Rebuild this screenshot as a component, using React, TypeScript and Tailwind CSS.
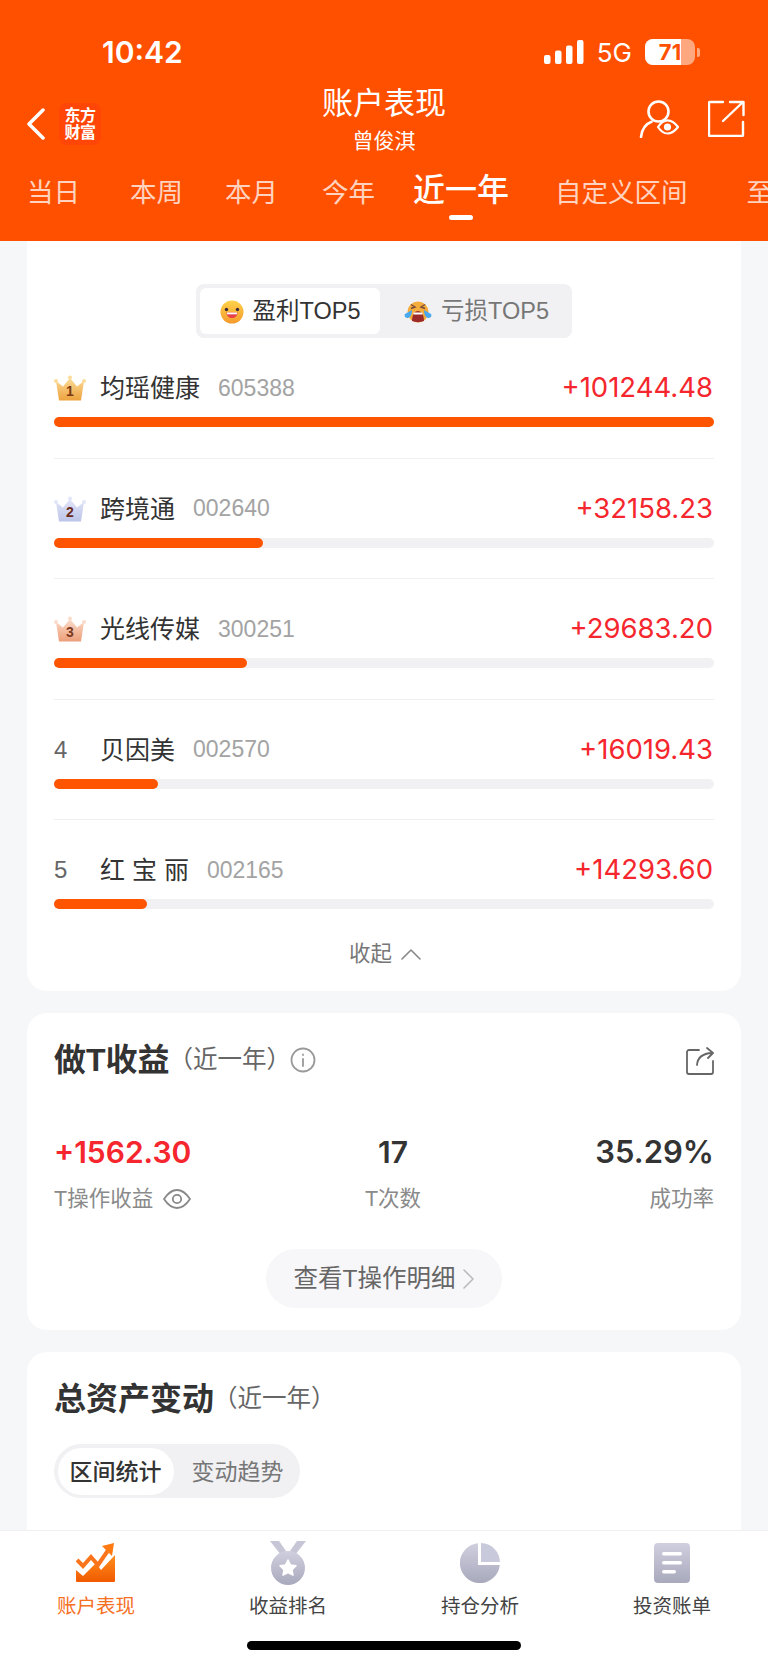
import React from "react";

const sans = { fontFamily: '"Liberation Sans","Noto Sans CJK SC",sans-serif' };
const digits = { fontFamily: "Inter,sans-serif" };

function Signal() {
  return (
    <svg width="40" height="24" viewBox="0 0 40 24" fill="#fff">
      <rect x="0" y="15" width="6.5" height="9" rx="2" />
      <rect x="11" y="10.5" width="6.5" height="13.5" rx="2" />
      <rect x="22" y="5.5" width="6.5" height="18.5" rx="2" />
      <rect x="33" y="0" width="6.5" height="24" rx="2" />
    </svg>
  );
}

function Battery() {
  return (
    <div className="flex items-center gap-[2px]">
      <div className="relative w-[50px] h-[26px] rounded-[8px] bg-white/50 overflow-hidden">
        <div className="absolute inset-y-0 left-0 w-[71%] bg-white" />
        <span className="absolute inset-0 flex items-center justify-center text-[22px] font-bold text-[#ff5000] leading-none" style={digits}>71</span>
      </div>
      <div className="w-[3px] h-[9px] rounded-r-[2px] bg-white/50" />
    </div>
  );
}

function WatchUser() {
  return (
    <svg width="40" height="38" viewBox="0 0 40 38" fill="none" stroke="#fff" strokeWidth="2.6" strokeLinecap="round">
      <circle cx="19.5" cy="11.5" r="10" />
      <path d="M2 37c.8-7.6 4.700-13 10.500-15.200" />
      <path d="M19 27c3-4.600 6-6.600 9.500-6.600S35.500 22.400 39 27c-3.500 4.500-7 6.500-10.500 6.500S22 31.500 19 27z" fill="#ff5000" strokeWidth="2.200" />
      <circle cx="28.500" cy="27" r="3.600" fill="#fff" stroke="none" />
    </svg>
  );
}

function ExportBox() {
  return (
    <svg width="37" height="37" viewBox="0 0 37 37" fill="none" stroke="#fff" strokeWidth="2.400" strokeLinecap="round" strokeLinejoin="round">
      <path d="M15 2H2a1 1 0 0 0-1 1v32a1 1 0 0 0 1 1h32a1 1 0 0 0 1-1V22" />
      <path d="M15 21 35 2M22 2h13.500v13" />
    </svg>
  );
}

function Smile() {
  return (
    <svg width="24" height="24" viewBox="0 0 24 24">
      <defs>
        <linearGradient id="smileFace" x1="0" y1="0" x2="0" y2="1">
          <stop offset="0" stopColor="#ffd24a" />
          <stop offset="1" stopColor="#f59a2c" />
        </linearGradient>
      </defs>
      <circle cx="12" cy="12" r="11.500" fill="url(#smileFace)" />
      <circle cx="6.500" cy="9.500" r="1.700" fill="#3a2a3a" />
      <circle cx="17.500" cy="9.500" r="1.700" fill="#3a2a3a" />
      <path d="M6.500 12.500h11c0 3.500-2.500 5.500-5.500 5.500s-5.500-2-5.500-5.500z" fill="#e8404a" />
      <path d="M7 12.500h10v1.800H7z" fill="#fff" />
    </svg>
  );
}

function Crying() {
  return (
    <svg width="28" height="22" viewBox="0 0 28 22">
      <circle cx="14" cy="11" r="10.500" fill="#f4ad3d" />
      <path d="M7 3.500l4 2.500-4 1.500M21 3.500 17 6l4 1.500" fill="none" stroke="#7a4a3a" strokeWidth="1.400" />
      <path d="M8 20c0-6 2.500-10 6-10s6 4 6 10c-3.500 1.500-8.500 1.500-12 0z" fill="#9c2a2a" />
      <path d="M9.500 11.500h9v2h-9z" fill="#fff" />
      <path d="M8 9 1 13c-1.500 3 1.500 5 4 3.500 2-1 3-4 3-7.500zM20 9l7 4c1.500 3-1.500 5-4 3.500-2-1-3-4-3-7.500z" fill="#4aa8ee" />
    </svg>
  );
}

const crownTones = {
  1: { top: "#fbdc98", bottom: "#eda23e", ink: "#7a3a12" },
  2: { top: "#e2e6f8", bottom: "#bcc4e8", ink: "#6a2a1a" },
  3: { top: "#fbdccb", bottom: "#ec9e78", ink: "#7a3a22" },
};

function Crown({ rank }: { rank: 1 | 2 | 3 }) {
  const tone = crownTones[rank];
  const id = `crownFill${rank}`;
  return (
    <div className="relative w-[32px] h-[26px]">
      <svg width="32" height="26" viewBox="0 0 32 26" className="absolute inset-0">
        <defs>
          <linearGradient id={id} x1="0" y1="0" x2="0" y2="1">
            <stop offset="0" stopColor={tone.top} />
            <stop offset="1" stopColor={tone.bottom} />
          </linearGradient>
        </defs>
        <path d="M2 6 9 11.500 16 3l7 8.500L30 6l-3 19.500H5z" fill={`url(#${id})`} />
        <circle cx="2" cy="6" r="2" fill={tone.top} />
        <circle cx="16" cy="2.500" r="2" fill={tone.top} />
        <circle cx="30" cy="6" r="2" fill={tone.top} />
      </svg>
      <span className="absolute left-0 right-0 top-[9px] text-center text-[14px] leading-[15px] font-bold" style={{ color: tone.ink, fontFamily: '"Liberation Sans",sans-serif' }}>{rank}</span>
    </div>
  );
}

type Holding = { rank: number; name: string; code: string; gain: string; fill: number };

const holdings: Holding[] = [
  { rank: 1, name: "均瑶健康", code: "605388", gain: "+101244.48", fill: 660 },
  { rank: 2, name: "跨境通", code: "002640", gain: "+32158.23", fill: 209 },
  { rank: 3, name: "光线传媒", code: "300251", gain: "+29683.20", fill: 193 },
  { rank: 4, name: "贝因美", code: "002570", gain: "+16019.43", fill: 104 },
  { rank: 5, name: "红 宝 丽", code: "002165", gain: "+14293.60", fill: 93 },
];

function HoldingRow({ item, last }: { item: Holding; last: boolean }) {
  return (
    <div className={`pt-[30px] ${last ? "" : "pb-[30.500px] border-b border-[#f0f0f2]"}`}>
      <div className="h-[40px] flex items-center">
        <div className="w-[46px] shrink-0">
          {item.rank <= 3 ? (
            <Crown rank={item.rank as 1 | 2 | 3} />
          ) : (
            <span className="text-[24px] text-[#666]">{item.rank}</span>
          )}
        </div>
        <span className="relative top-[1px] text-[25px] text-[#333] whitespace-pre">{item.name}</span>
        <span className="ml-[18px] text-[23px] text-[#a3a3a3]">{item.code}</span>
        <span className="ml-auto pr-[1px] text-[27.500px] text-[#f5262d]" style={digits}>{item.gain}</span>
      </div>
      <div className="mt-[9px] h-[10px] rounded-full bg-[#f1f1f4]">
        <div className="h-full rounded-full bg-[#ff5500]" style={{ width: item.fill }} />
      </div>
    </div>
  );
}

function TabIcon({ kind }: { kind: string }) {
  if (kind === "chart") {
    return (
      <svg width="40" height="40" viewBox="0 0 40 40">
        <defs>
          <linearGradient id="chartFill" x1="0" y1="0" x2="0" y2="1">
            <stop offset="0" stopColor="#ff8f1f" />
            <stop offset="1" stopColor="#f05a00" />
          </linearGradient>
        </defs>
        <path d="M0 27l7 6 13-13 5 7 14-15v26a1 1 0 0 1-1 1H1a1 1 0 0 1-1-1z" fill="url(#chartFill)" />
        <path d="M1 17l6 6 8-9 7 8 11-16" fill="none" stroke="#f9741a" strokeWidth="4" />
        <path d="M26 3 38 0l-2 13z" fill="#ff7a10" />
      </svg>
    );
  }
  if (kind === "medal") {
    return (
      <svg width="36" height="44" viewBox="0 0 36 44">
        <defs>
          <linearGradient id="medalFill" x1="0" y1="0" x2="0" y2="1">
            <stop offset="0" stopColor="#cfcfde" />
            <stop offset="1" stopColor="#a9a9bd" />
          </linearGradient>
        </defs>
        <path d="M0 0h9l7 10-5 4zM36 0h-9l-7 10 5 4z" fill="#c6c6d6" />
        <circle cx="18" cy="27" r="17" fill="url(#medalFill)" />
        <path d="M18 19l2.500 5 5.500.8-4 3.900 1 5.500-5-2.600-5 2.600 1-5.500-4-3.900 5.500-.8z" fill="#fff" strokeLinejoin="round" stroke="#fff" strokeWidth="1.500" />
      </svg>
    );
  }
  if (kind === "pie") {
    return (
      <svg width="40" height="40" viewBox="0 0 40 40">
        <defs>
          <linearGradient id="pieFill" x1="0" y1="0" x2="0" y2="1">
            <stop offset="0" stopColor="#cfcfde" />
            <stop offset="1" stopColor="#a9a9bd" />
          </linearGradient>
        </defs>
        <path d="M18 .2V22h21.800A20 20 0 1 1 18 .2z" fill="url(#pieFill)" />
        <path d="M21 0a19.500 19.500 0 0 1 19 19H21z" fill="#c9c9dc" />
      </svg>
    );
  }
  return (
    <svg width="36" height="40" viewBox="0 0 36 40">
      <defs>
        <linearGradient id="docFill" x1="0" y1="0" x2="0" y2="1">
          <stop offset="0" stopColor="#cfcfde" />
          <stop offset="1" stopColor="#a9a9bd" />
        </linearGradient>
      </defs>
      <rect width="36" height="40" rx="4" fill="url(#docFill)" />
      <rect x="8" y="9" width="20" height="3.500" rx="1.700" fill="#fff" />
      <rect x="8" y="18" width="20" height="3.500" rx="1.700" fill="#fff" />
      <rect x="8" y="27" width="14" height="3.500" rx="1.700" fill="#fff" />
    </svg>
  );
}

const tabs = [
  { icon: "chart", label: "账户表现", active: true },
  { icon: "medal", label: "收益排名", active: false },
  { icon: "pie", label: "持仓分析", active: false },
  { icon: "doc", label: "投资账单", active: false },
];

export default function App() {
  return (
    <div className="relative w-[768px] h-[1665px] flex flex-col overflow-hidden bg-[#f6f7f9]" style={sans}>
      <header className="shrink-0 h-[241px] bg-[#ff5000] text-white flex flex-col">
        {/* status bar */}
        <div className="h-[80px] pt-[24px] flex items-center pl-[102px] pr-[68px]">
          <span className="text-[30px] font-semibold" style={digits}>10:42</span>
          <div className="ml-auto flex items-center">
            <Signal />
            <span className="ml-[13px] mr-[13px] text-[26px]" style={digits}>5G</span>
            <Battery />
          </div>
        </div>
        {/* title row */}
        <div className="relative h-[82px] flex items-start">
          <div className="pl-[27px] pt-[23px] flex items-center">
            <svg width="18" height="32" viewBox="0 0 18 32" fill="none" stroke="#fff" strokeWidth="3.500" strokeLinecap="round" strokeLinejoin="round">
              <path d="M16 2 2 16l14 14" />
            </svg>
            <div className="ml-[14px] w-[42px] h-[42px] rounded-[8px] bg-[#ff4606] flex items-center justify-center text-center text-[16px] leading-[17px] font-bold tracking-[-0.5px]">
              东方<br />财富
            </div>
          </div>
          <div className="absolute left-0 right-0 top-[4px] text-center">
            <div className="text-[31px] leading-[40px]">账户表现</div>
            <div className="text-[21px] leading-[30px] mt-[2px]">曾俊淇</div>
          </div>
          <div className="ml-auto pt-[20px] pr-[23px] flex items-start gap-[29px]">
            <WatchUser />
            <ExportBox />
          </div>
        </div>
        {/* period tabs */}
        <div className="h-[79px] pl-[27px] flex items-start overflow-hidden whitespace-nowrap text-[26.500px] leading-[62px] text-white/75">
          <span>当日</span>
          <span className="ml-[50px]">本周</span>
          <span className="ml-[42px]">本月</span>
          <span className="ml-[44px]">今年</span>
          <span className="relative ml-[38px] text-[32px] leading-[56px] font-medium text-white">
            近一年
            <span className="absolute left-[36px] top-[53px] w-[24px] h-[5px] rounded-full bg-white" />
          </span>
          <span className="ml-[46px]">自定义区间</span>
          <span className="ml-[59px]">至今</span>
        </div>
      </header>

      <main className="flex-1 min-h-0 overflow-hidden px-[27px] flex flex-col gap-[22px]">
        <section className="bg-white rounded-b-[20px] pt-[43px] px-[27px] h-[750px] shrink-0">
          <div className="flex justify-center">
            <div className="w-[376px] h-[54px] rounded-[8px] bg-[#f1f1f4] p-[4px] flex items-stretch">
              <div className="w-[180px] rounded-[6px] bg-white flex items-center justify-center gap-[9px] pt-[2px] text-[23.500px] text-[#333]">
                <Smile />
                <span>盈利TOP5</span>
              </div>
              <div className="flex-1 flex items-center justify-center gap-[9px] pt-[2px] pl-[5px] text-[23.500px] text-[#777]">
                <Crying />
                <span>亏损TOP5</span>
              </div>
            </div>
          </div>
          {holdings.map((item, i) => (
            <HoldingRow key={item.rank} item={item} last={i === holdings.length - 1} />
          ))}
          <div className="mt-[28px] ml-[3px] h-[34px] flex items-center justify-center gap-[8px] text-[21.500px] text-[#777]">
            <span>收起</span>
            <svg width="22" height="12" viewBox="0 0 22 12" fill="none" stroke="#888" strokeWidth="1.600" strokeLinecap="round" strokeLinejoin="round">
              <path d="M2 11 11 2l9 9" />
            </svg>
          </div>
        </section>

        <section className="bg-white rounded-[20px] h-[317px] px-[27px] pt-[27px] shrink-0">
          <div className="flex items-center h-[40px]">
            <h2 className="text-[32px] font-bold text-[#333]">做T收益</h2>
            <span className="ml-[-1px] text-[24.500px] text-[#666]">（近一年）</span>
            <svg className="ml-[-1px]" width="26" height="26" viewBox="0 0 26 26" fill="none" stroke="#999" strokeWidth="1.800" strokeLinecap="round">
              <circle cx="13" cy="13" r="11.500" />
              <path d="M13 12v7M13 7.500v.5" />
            </svg>
            <svg className="ml-auto" width="28" height="29" viewBox="0 0 28 29" fill="none" stroke="#666" strokeWidth="1.800" strokeLinecap="round" strokeLinejoin="round">
              <path d="M13 4H3a2 2 0 0 0-2 2v20a2 2 0 0 0 2 2h22a2 2 0 0 0 2-2V15" />
              <path d="M11 19c.5-7 5-11.500 15-12M21 2l6 5-5 5" />
            </svg>
          </div>
          <div className="mt-[47px] grid grid-cols-3">
            <div>
              <div className="text-[30px] leading-[50px] font-semibold text-[#f5262d]" style={digits}>+1562.30</div>
              <div className="mt-[6px] flex items-center text-[21.500px] leading-[32px] text-[#8a8a8a]">
                <span>T操作收益</span>
                <svg className="ml-[10px]" width="28" height="20" viewBox="0 0 28 20" fill="none" stroke="#888" strokeWidth="1.800">
                  <path d="M1 10c4-6 8.500-9 13-9s9 3 13 9c-4 6-8.500 9-13 9s-9-3-13-9z" />
                  <circle cx="14" cy="10" r="4.200" />
                </svg>
              </div>
            </div>
            <div className="text-center pl-[18px]">
              <div className="text-[30px] leading-[50px] font-semibold text-[#333]" style={digits}>17</div>
              <div className="mt-[6px] text-[21.500px] leading-[32px] text-[#8a8a8a]">T次数</div>
            </div>
            <div className="text-right">
              <div className="text-[31px] leading-[50px] font-semibold text-[#333]" style={digits}>35.29%</div>
              <div className="mt-[6px] text-[21.500px] leading-[32px] text-[#8a8a8a]">成功率</div>
            </div>
          </div>
          <div className="mt-[34px] flex justify-center">
            <div className="w-[236px] h-[59px] rounded-full bg-[#f7f7f9] flex items-center justify-center gap-[8px] pt-[1px] text-[24.500px] text-[#666]">
              <span>查看T操作明细</span>
              <svg width="11" height="20" viewBox="0 0 11 20" fill="none" stroke="#bbb" strokeWidth="1.600" strokeLinecap="round" strokeLinejoin="round">
                <path d="M1 1l9 9-9 9" />
              </svg>
            </div>
          </div>
        </section>

        <section className="bg-white rounded-t-[20px] flex-1 px-[27px] pt-[27px]">
          <div className="flex items-center h-[40px]">
            <h2 className="text-[32px] font-bold text-[#333]">总资产变动</h2>
            <span className="ml-[-1px] text-[24.500px] text-[#666]">（近一年）</span>
          </div>
          <div className="mt-[25px] w-[246px] h-[54px] rounded-full bg-[#f1f1f4] p-[3.500px] flex items-stretch">
            <div className="w-[116px] rounded-full bg-white flex items-center justify-center pt-[2px] text-[23px] font-medium text-[#333]">区间统计</div>
            <div className="flex-1 flex items-center justify-center pt-[2px] pl-[5px] text-[23px] text-[#777]">变动趋势</div>
          </div>
        </section>
      </main>

      <nav className="shrink-0 h-[135px] bg-white border-t border-[#f0f0f2] relative">
        <div className="grid grid-cols-4">
          {tabs.map((tab) => (
            <div key={tab.label} className="flex flex-col items-center">
              <div className="h-[58px] pt-[6px] flex items-center"><TabIcon kind={tab.icon} /></div>
              <span className={`mt-[2px] text-[19.500px] leading-[30px] ${tab.active ? "text-[#f5701f]" : "text-[#444]"}`}>{tab.label}</span>
            </div>
          ))}
        </div>
        <div className="absolute left-[247px] bottom-[15px] w-[274px] h-[9px] rounded-full bg-black" />
      </nav>
    </div>
  );
}
